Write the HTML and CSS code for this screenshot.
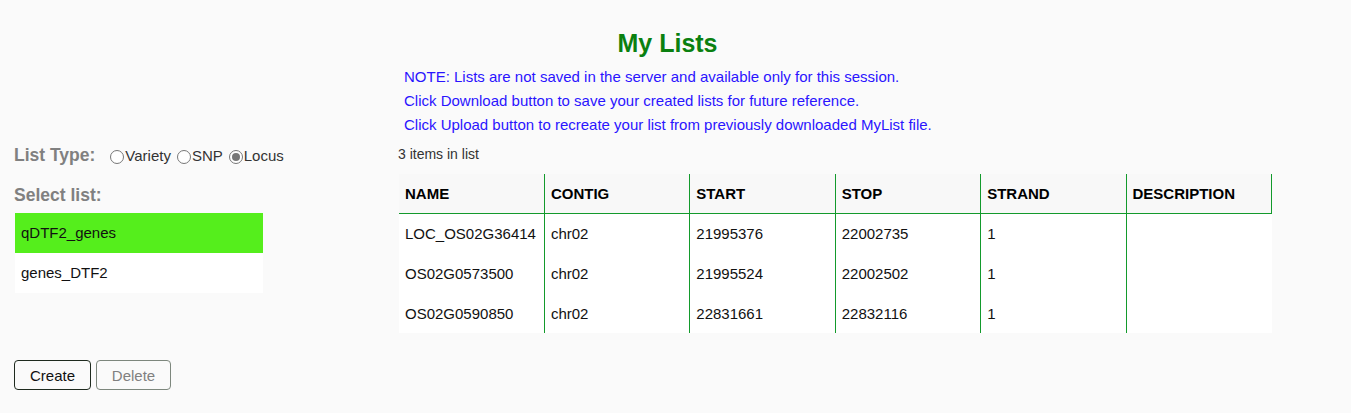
FILE: index.html
```html
<!DOCTYPE html>
<html>
<head>
<meta charset="utf-8">
<title>My Lists</title>
<link rel="stylesheet" href="styles.css">
</head>
<body>
<h2 class="title">My Lists</h2>
<div class="notes">
  <div>NOTE: Lists are not saved in the server and available only for this session.</div>
  <div>Click Download button to save your created lists for future reference.</div>
  <div>Click Upload button to recreate your list from previously downloaded MyList file.</div>
</div>
<div class="main">
  <div class="left">
    <div class="type-row">
      <span class="label">List Type:</span>
      <span class="radios">
        <label class="radio"><input type="radio" name="lt"><span>Variety</span></label>
        <label class="radio"><input type="radio" name="lt"><span>SNP</span></label>
        <label class="radio"><input type="radio" name="lt" checked><span>Locus</span></label>
      </span>
    </div>
    <div class="label select-label">Select list:</div>
    <ul class="lists">
      <li class="selected">qDTF2_genes</li>
      <li>genes_DTF2</li>
    </ul>
    <div class="buttons">
      <button class="btn">Create</button>
      <button class="btn disabled" disabled>Delete</button>
    </div>
  </div>
  <div class="right">
    <div class="count">3 items in list</div>
    <table class="grid">
      <thead>
        <tr><th>NAME</th><th>CONTIG</th><th>START</th><th>STOP</th><th>STRAND</th><th class="last">DESCRIPTION</th></tr>
      </thead>
      <tbody>
        <tr><td>LOC_OS02G36414</td><td>chr02</td><td>21995376</td><td>22002735</td><td>1</td><td></td></tr>
        <tr><td>OS02G0573500</td><td>chr02</td><td>21995524</td><td>22002502</td><td>1</td><td></td></tr>
        <tr><td>OS02G0590850</td><td>chr02</td><td>22831661</td><td>22832116</td><td>1</td><td></td></tr>
      </tbody>
    </table>
  </div>
</div>
</body>
</html>
```
FILE: styles.css
```css
* { box-sizing: border-box; }
body {
  margin: 0;
  background: #fafafa;
  font-family: "Liberation Sans", Arial, sans-serif;
  font-size: 15px;
  color: #222;
}
.title {
  margin: 0;
  padding: 28px 16px 0 0;
  font-size: 25px;
  line-height: 30px;
  font-weight: bold;
  color: #0a8010;
  text-align: center;
}
.notes {
  margin-top: 7px;
  padding-left: 404px;
  line-height: 24px;
  color: #2a14ff;
}
.main {
  display: flex;
  margin-top: 7px;
}
.left {
  width: 398px;
  padding-left: 14px;
}
.label {
  font-size: 17.5px;
  font-weight: bold;
  color: #808080;
  line-height: 22px;
}
.type-row {
  display: flex;
  align-items: center;
  height: 22px;
}
.radios {
  display: flex;
  align-items: center;
  margin-left: 9px;
  color: #333;
}
.radio {
  display: flex;
  align-items: center;
}
.radio input {
  appearance: none;
  -webkit-appearance: none;
  width: 14px;
  height: 14px;
  margin: 3px 1px 0 6px;
  border: 1px solid #777;
  border-radius: 50%;
  background: #fff;
  display: grid;
  place-items: center;
}
.radio input:checked::after {
  content: "";
  width: 8px;
  height: 8px;
  border-radius: 50%;
  background: #777;
}
.select-label {
  margin-top: 18px;
}
.lists {
  list-style: none;
  margin: 7px 0 0 1px;
  padding: 0;
  width: 248px;
}
.lists li {
  height: 40px;
  line-height: 40px;
  padding-left: 6px;
  background: #fff;
  color: #111;
}
.lists li.selected {
  background: #55ee1c;
}
.buttons {
  display: flex;
  gap: 5px;
  margin-top: 67px;
}
.btn {
  width: 77px;
  height: 30px;
  font-family: "Liberation Sans", Arial, sans-serif;
  font-size: 15px;
  background: #fafafa;
  border: 1px solid #1e2a1e;
  border-radius: 4px;
  color: #111;
  padding: 0;
}
.btn.disabled {
  width: 75px;
  border-color: #7d877d;
  color: #808080;
}
.right {
  flex: 1;
}
.count {
  font-size: 14px;
  line-height: 20px;
  color: #333;
}
.grid {
  margin-top: 10px;
  margin-left: 1px;
  border-collapse: collapse;
  table-layout: fixed;
  width: 873px;
}
.grid th {
  height: 39px;
  background: #f8f8f8;
  text-align: left;
  font-weight: bold;
  color: #000;
  padding: 0 6px;
  border-bottom: 1px solid #139a2c;
}
.grid td {
  height: 40px;
  background: #fff;
  padding: 0 6px;
  color: #111;
}
.grid th + th, .grid td + td {
  border-left: 1px solid #139a2c;
}
.grid th.last {
  border-right: 1px solid #139a2c;
}
```
